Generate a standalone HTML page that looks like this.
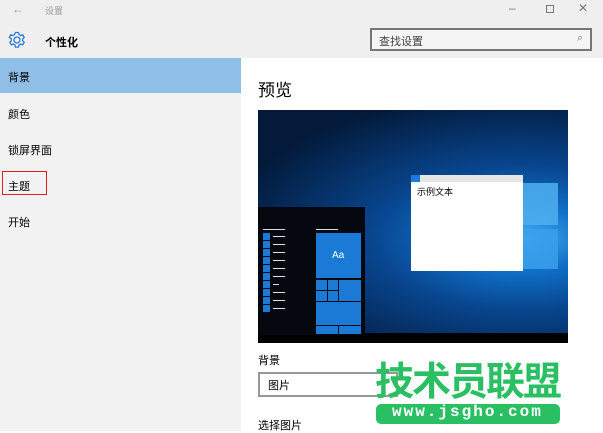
<!DOCTYPE html><html><head><meta charset="utf-8"><style>
body{margin:0;width:603px;height:431px;overflow:hidden;background:#fff;font-family:"Liberation Sans","Noto Sans CJK SC",sans-serif;position:relative}
div,span{position:absolute;box-sizing:border-box}
.t{font-size:11px;color:#000}
.l{height:1px;background:#ddd;width:12px;left:273px}
.b{width:7px;height:7px;left:263px;background:#1a7ad6}
</style></head><body>
<div style="left:0;top:0;width:603px;height:58px;background:#efefef"></div>
<div style="left:0;top:58px;width:241px;height:373px;background:#f2f2f2"></div>
<span style="left:12px;top:2px;font-size:12px;color:#999">←</span>
<span style="left:45px;top:4px;font-size:9px;color:#999">设置</span>
<span style="left:509px;top:1px;font-size:12px;color:#777">–</span>
<div style="left:546px;top:5px;width:8px;height:8px;border:1px solid #777"></div>
<span style="left:578px;top:1px;font-size:12px;color:#777">✕</span>
<svg style="position:absolute;left:8px;top:31px" width="18" height="18" viewBox="0 0 18 18"><g fill="none" stroke="#2b7bd6" stroke-width="1.3"><circle cx="9" cy="9" r="3"/><path d="M7.5 1.5h3l.5 2 1.7 1 2-.7 1.5 2.6-1.5 1.4v2l1.5 1.4-1.5 2.6-2-.7-1.7 1-.5 2h-3l-.5-2-1.7-1-2 .7-1.5-2.6 1.5-1.4v-2L1.3 6.4l1.5-2.6 2 .7 1.7-1z"/></g></svg>
<span style="left:45px;top:34px;font-size:11px;font-weight:bold">个性化</span>
<div style="left:370px;top:28px;width:222px;height:23px;border:2px solid #777;background:#f5f5f5"></div>
<span style="left:379px;top:33px;font-size:11px;color:#444">查找设置</span>
<span style="left:577px;top:32px;font-size:11px;color:#777">⌕</span>
<div style="left:0;top:58px;width:241px;height:35px;background:#8fbfe6"></div>
<span class="t" style="left:8px;top:69px">背景</span>
<span class="t" style="left:8px;top:106px">颜色</span>
<span class="t" style="left:8px;top:142px">锁屏界面</span>
<span class="t" style="left:8px;top:178px">主题</span>
<div style="left:2px;top:171px;width:45px;height:24px;border:1px solid #e02020"></div>
<span class="t" style="left:8px;top:214px">开始</span>
<span style="left:258px;top:76px;font-size:17px">预览</span>
<div style="left:258px;top:110px;width:310px;height:233px;background:radial-gradient(ellipse at 85% 55%,#4ab0f5 0%,#1070c8 18%,#08458e 40%,#031a3a 80%)"></div>
<div style="left:523px;top:183px;width:35px;height:42px;background:#4fb0f0;opacity:.85"></div>
<div style="left:523px;top:229px;width:35px;height:40px;background:#3aa0ec;opacity:.85"></div>
<div style="left:258px;top:333px;width:310px;height:10px;background:#000"></div>
<div style="left:258px;top:207px;width:107px;height:128px;background:#05080e"></div>
<div style="left:263px;top:229px;width:22px;height:1px;background:#ddd"></div>
<div class="b" style="top:233px"></div><div class="l" style="top:236px"></div>
<div class="b" style="top:241px"></div><div class="l" style="top:244px"></div>
<div class="b" style="top:249px"></div><div class="l" style="top:252px"></div>
<div class="b" style="top:257px"></div><div class="l" style="top:260px"></div>
<div class="b" style="top:265px"></div><div class="l" style="top:268px"></div>
<div class="b" style="top:273px"></div><div class="l" style="top:276px"></div>
<div class="b" style="top:281px"></div><div class="l" style="top:284px;width:6px"></div>
<div class="b" style="top:289px"></div><div class="l" style="top:292px"></div>
<div class="b" style="top:297px"></div><div class="l" style="top:300px"></div>
<div class="b" style="top:305px"></div><div class="l" style="top:308px"></div>
<div style="left:316px;top:229px;width:22px;height:1px;background:#ddd"></div>
<div style="left:316px;top:233px;width:45px;height:45px;background:#1a7ad6"></div>
<span style="left:332px;top:250px;font-size:10px;color:#fff">Aa</span>
<div style="left:316px;top:279px;width:45px;height:55px;background:#1a7ad6;border-top:1px solid #05080e"></div>
<div style="left:327px;top:279px;width:1px;height:22px;background:#05080e"></div>
<div style="left:338px;top:279px;width:1px;height:22px;background:#05080e"></div>
<div style="left:316px;top:290px;width:22px;height:1px;background:#05080e"></div>
<div style="left:316px;top:301px;width:45px;height:1px;background:#05080e"></div>
<div style="left:316px;top:325px;width:45px;height:1px;background:#05080e"></div>
<div style="left:338px;top:325px;width:1px;height:9px;background:#05080e"></div>
<div style="left:411px;top:175px;width:112px;height:96px;background:#fff"></div>
<div style="left:411px;top:175px;width:112px;height:7px;background:#e6e6e6"></div>
<div style="left:411px;top:175px;width:9px;height:7px;background:#1a7ad6"></div>
<span style="left:417px;top:185px;font-size:9px">示例文本</span>
<span class="t" style="left:258px;top:352px">背景</span>
<div style="left:258px;top:372px;width:140px;height:25px;border:2px solid #999;background:#fff"></div>
<span class="t" style="left:268px;top:377px">图片</span>
<span class="t" style="left:258px;top:417px">选择图片</span>
<span style="left:375px;top:361px;font-size:39px;font-weight:bold;color:#2bbf64;letter-spacing:-2px;line-height:44px">技术员联盟</span>
<div style="left:376px;top:404px;width:184px;height:20px;background:#2bbf64;border-radius:5px"></div>
<span style="left:392px;top:403px;font-size:16px;font-weight:bold;color:#fff;letter-spacing:2px;font-family:'Liberation Mono',monospace">www.jsgho.com</span>
</body></html>
